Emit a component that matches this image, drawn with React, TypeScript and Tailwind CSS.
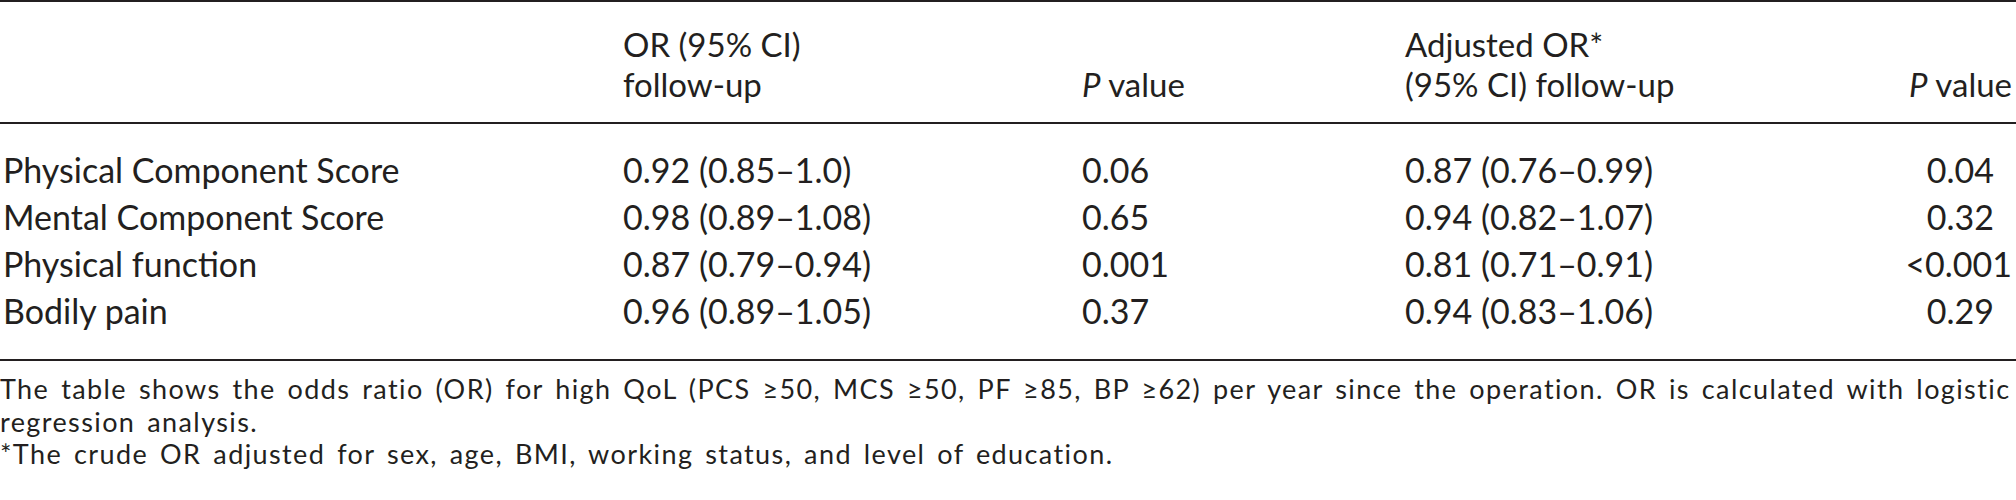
import React from 'react';

interface Row {
  label: string;
  or: string;
  p: string;
  adjOr: string;
  adjP: string;
}

const rows: Row[] = [
  { label: 'Physical Component Score', or: '0.92 (0.85–1.0)', p: '0.06', adjOr: '0.87 (0.76–0.99)', adjP: '0.04' },
  { label: 'Mental Component Score', or: '0.98 (0.89–1.08)', p: '0.65', adjOr: '0.94 (0.82–1.07)', adjP: '0.32' },
  { label: 'Physical function', or: '0.87 (0.79–0.94)', p: '0.001', adjOr: '0.81 (0.71–0.91)', adjP: '<0.001' },
  { label: 'Bodily pain', or: '0.96 (0.89–1.05)', p: '0.37', adjOr: '0.94 (0.83–1.06)', adjP: '0.29' },
];

export default function App() {
  return (
    <div className="w-[2016px] h-[500px] bg-white text-[#231f20] font-['Lato','Liberation_Sans',sans-serif]">
      {/* header block between top and mid rules */}
      <div className="border-t-2 border-b-2 border-[#231f20]">
        <div className="grid grid-cols-[623px_459px_323px_1fr_auto] items-end text-[33px] leading-[40px] pt-[22px] pb-[18px]">
          <div />
          <div>
            OR (95% CI)
            <br />
            follow-up
          </div>
          <div>
            <i>P</i> value
          </div>
          <div>
            Adjusted OR*
            <br />
            (95% CI) follow-up
          </div>
          <div className="text-right pr-[4px]">
            <i>P</i> value
          </div>
        </div>
      </div>

      <div className="border-b-2 border-[#231f20] pt-[22px] pb-[25px]">
        {rows.map((r) => (
          <div
            key={r.label}
            className="grid grid-cols-[623px_459px_323px_1fr_auto] text-[34px] leading-[47px]"
          >
            <div className="pl-[3px]">{r.label}</div>
            <div>{r.or}</div>
            <div>{r.p}</div>
            <div>{r.adjOr}</div>
            {/* keep decimals lined up with <0.001 */}
            <div className={r.adjP.startsWith('<') ? 'text-right pr-[4px]' : 'text-right pr-[22px]'}>
              {r.adjP}
            </div>
          </div>
        ))}
      </div>

      <div className="text-[27px] leading-[32.5px] tracking-[1.4px] [word-spacing:3.6px] pt-[12px] whitespace-nowrap">
        <div>
          The table shows the odds ratio (OR) for high QoL (PCS ≥50, MCS ≥50, PF ≥85, BP ≥62) per year since the
          operation. OR is calculated with logistic
        </div>
        <div>regression analysis.</div>
        <div>*The crude OR adjusted for sex, age, BMI, working status, and level of education.</div>
      </div>
    </div>
  );
}
